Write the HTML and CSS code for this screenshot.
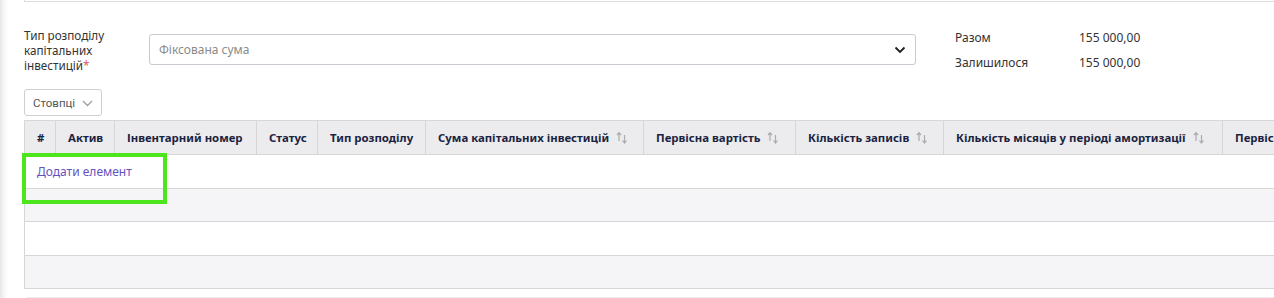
FILE: index.html
```html
<!DOCTYPE html>
<html lang="uk">
<head>
    <meta charset="UTF-8">
    <title>Капітальні інвестиції</title>
    <link rel="stylesheet" href="styles.css">
</head>
<body>
    <div class="page">
        <div class="prev-panel"></div>

        <div class="form-row">
            <label class="field-label" for="distType">Тип розподілу капітальних інвестицій<span class="req">*</span></label>
            <div class="select" id="distType">
                <span class="placeholder">Фіксована сума</span>
                <svg class="chevron" width="12" height="8" viewBox="0 0 12 8"><path d="M1.5 1.5 L6 6 L10.5 1.5" fill="none" stroke="#1d1d1d" stroke-width="1.8"/></svg>
            </div>
            <div class="totals">
                <span>Разом</span><span>155 000,00</span>
                <span>Залишилося</span><span>155 000,00</span>
            </div>
        </div>

        <button class="columns-btn">
            <span>Стовпці</span>
            <svg class="btn-chevron" width="11" height="7" viewBox="0 0 11 7"><path d="M1 1 L5.5 5.5 L10 1" fill="none" stroke="#a0a0a0" stroke-width="1.4"/></svg>
        </button>

        <div class="table-wrap">
            <table class="grid">
                <colgroup>
                    <col style="width:31px">
                    <col style="width:59px">
                    <col style="width:142px">
                    <col style="width:61px">
                    <col style="width:108px">
                    <col style="width:218px">
                    <col style="width:152px">
                    <col style="width:148px">
                    <col style="width:279px">
                    <col style="width:300px">
                </colgroup>
                <thead>
                    <tr>
                        <th>#</th>
                        <th>Актив</th>
                        <th>Інвентарний номер</th>
                        <th>Статус</th>
                        <th>Тип розподілу</th>
                        <th><span class="th-inner">Сума капітальних інвестицій <svg class="sort" width="12" height="13" viewBox="0 0 12 13"><path d="M3 10 V2 M1 4 L3 1.6 L5 4" fill="none" stroke="#ababab" stroke-width="1.2"/><path d="M8.5 4 V11.5 M6.5 9.5 L8.5 12 L10.5 9.5" fill="none" stroke="#ababab" stroke-width="1.2"/></svg></span></th>
                        <th><span class="th-inner">Первісна вартість <svg class="sort" width="12" height="13" viewBox="0 0 12 13"><path d="M3 10 V2 M1 4 L3 1.6 L5 4" fill="none" stroke="#ababab" stroke-width="1.2"/><path d="M8.5 4 V11.5 M6.5 9.5 L8.5 12 L10.5 9.5" fill="none" stroke="#ababab" stroke-width="1.2"/></svg></span></th>
                        <th><span class="th-inner">Кількість записів <svg class="sort" width="12" height="13" viewBox="0 0 12 13"><path d="M3 10 V2 M1 4 L3 1.6 L5 4" fill="none" stroke="#ababab" stroke-width="1.2"/><path d="M8.5 4 V11.5 M6.5 9.5 L8.5 12 L10.5 9.5" fill="none" stroke="#ababab" stroke-width="1.2"/></svg></span></th>
                        <th><span class="th-inner">Кількість місяців у періоді амортизації <svg class="sort" width="12" height="13" viewBox="0 0 12 13"><path d="M3 10 V2 M1 4 L3 1.6 L5 4" fill="none" stroke="#ababab" stroke-width="1.2"/><path d="M8.5 4 V11.5 M6.5 9.5 L8.5 12 L10.5 9.5" fill="none" stroke="#ababab" stroke-width="1.2"/></svg></span></th>
                        <th>Первісна вартість після</th>
                    </tr>
                </thead>
                <tbody>
                    <tr><td colspan="10"><a class="add-link" href="#">Додати елемент</a></td></tr>
                    <tr class="alt"><td colspan="10"></td></tr>
                    <tr><td colspan="10"></td></tr>
                    <tr class="alt"><td colspan="10"></td></tr>
                </tbody>
            </table>
        </div>

        <div class="next-panel"></div>

        <div class="highlight"></div>
    </div>
</body>
</html>
```

FILE: styles.css
```css
* {
    box-sizing: border-box;
    margin: 0;
    padding: 0;
}

html, body {
    height: 100%;
}

body {
    font-family: "Noto Sans", "Open Sans", sans-serif;
    font-size: 12px;
    color: #333;
    background: linear-gradient(90deg, #e6e6e6 0, #f6f6f6 4px, #fff 8px) no-repeat;
    background-color: #fff;
    overflow: hidden;
}

.page {
    position: relative;
    padding-left: 24px;
    height: 298px;
    overflow: hidden;
}

.prev-panel {
    height: 2px;
    border-left: 1px solid #dcdcdc;
    border-bottom: 1px solid #dcdcdc;
}

/* form */

.form-row {
    display: flex;
    align-items: flex-start;
    margin-top: 23px;
}

.field-label {
    width: 125px;
    padding-top: 3px;
    padding-right: 20px;
    font-size: 11.7px;
    line-height: 15px;
    color: #333;
}

.req {
    color: #e05a5a;
}

.select {
    width: 767px;
    height: 31px;
    margin-top: 9px;
    border: 1px solid #c9c9d2;
    border-radius: 3px;
    display: flex;
    align-items: center;
    justify-content: space-between;
    padding: 0 9px 0 9px;
}

.placeholder {
    color: #8a8a8a;
}

.totals {
    display: grid;
    grid-template-columns: 124px auto;
    line-height: 25px;
    margin-left: 39px;
    color: #333;
}

/* columns button */

.columns-btn {
    margin-top: 14px;
    width: 78px;
    height: 27px;
    border: 1px solid #cfcfcf;
    border-radius: 3px;
    background: #fff;
    font-family: Roboto, "Noto Sans", sans-serif;
    font-size: 11.5px;
    color: #555;
    display: flex;
    align-items: center;
    gap: 7px;
    padding: 0 8px;
}

.btn-chevron {
    flex: none;
    margin-top: 2px;
}

/* table */

.table-wrap {
    margin-top: 4px;
    overflow: hidden;
}

.grid {
    border-collapse: collapse;
    table-layout: fixed;
    width: 1498px;
}

.grid th {
    height: 34px;
    background: #ececef;
    border: 1px solid #d6d6d6;
    padding: 0 12px;
    text-align: left;
    font-size: 11.4px;
    font-weight: 700;
    color: #1b2340;
    white-space: nowrap;
    overflow: hidden;
}

.th-inner {
    display: inline-flex;
    align-items: center;
    gap: 7px;
}

.sort {
    flex: none;
}

.grid td {
    height: 33.5px;
    border: 1px solid #d6d6d6;
    border-right: none;
    padding: 0 12px;
}

.grid tr.alt td {
    background: #f5f5f7;
}

.add-link {
    color: #6652bf;
    text-decoration: none;
}

.next-panel {
    margin-top: 8px;
    margin-left: 2px;
    border-top: 1px solid #ececec;
}

/* annotation */

.highlight {
    position: absolute;
    left: 22px;
    top: 153px;
    width: 145px;
    height: 51px;
    border: 4px solid #4de61d;
}
```
